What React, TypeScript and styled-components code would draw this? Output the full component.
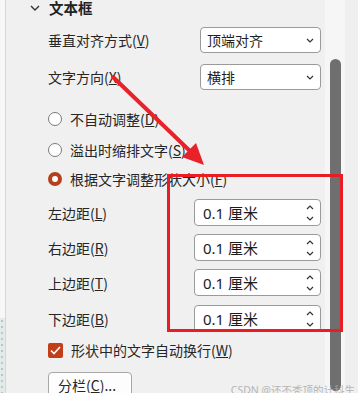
import styled, { createGlobalStyle } from "styled-components";

const GlobalStyle = createGlobalStyle`
  html, body {
    margin: 0;
    padding: 0;
    background: #f0f0f0;
  }
  body {
    font-family: "Noto Sans", "Noto Sans CJK SC", sans-serif;
  }
`;

const Screen = styled.div`
  position: relative;
  width: 358px;
  height: 393px;
  overflow: hidden;
  display: flex;
  background: #f0f0f0;
  color: #262626;
`;

const LeftStrip = styled.div`
  width: 5px;
  border-right: 1px solid #d6d6d6;
  display: flex;
  flex-direction: column;
`;

const StripTop = styled.div`
  flex: 1;
  background: #f7f7f7;
`;

const StripBottom = styled.div`
  height: 75px;
  background: #e2eaea;
  background-image: radial-gradient(#b9c6c6 0.7px, transparent 0.8px);
  background-size: 4px 6px;
`;

const Panel = styled.div`
  flex: 1;
  padding: 0 4px 0 42px;
  display: flex;
  flex-direction: column;
  font-family: "Noto Sans CJK SC", sans-serif;
  font-size: 14px;
`;

const Header = styled.div`
  display: flex;
  align-items: center;
  height: 15px;
  margin-left: -18px;
  gap: 9px;
  font-weight: 700;
  font-size: 14.5px;
  line-height: 15px;
  color: #222;
`;

const Row = styled.div<{ $mt: number; $h: number }>`
  display: flex;
  align-items: center;
  justify-content: space-between;
  margin-top: ${(p) => p.$mt}px;
  height: ${(p) => p.$h}px;
  line-height: 20px;
`;

const Label = styled.span`
  white-space: nowrap;
`;

const Select = styled.div`
  box-sizing: border-box;
  width: 121px;
  height: 26px;
  border: 1px solid #9a9a9a;
  border-radius: 4px;
  background: #fff;
  display: flex;
  align-items: center;
  justify-content: space-between;
  padding: 0 6px 0 6px;
  font-size: 14px;
  color: #1f1f1f;
`;

const Spinner = styled.div`
  box-sizing: border-box;
  width: 127px;
  height: 27px;
  border: 1px solid #9a9a9a;
  border-radius: 4px;
  background: #fff;
  display: flex;
  align-items: center;
  justify-content: space-between;
  padding: 0 6px 0 8px;
  font-family: "Noto Sans", "Noto Sans CJK SC", sans-serif;
  font-size: 15px;
  color: #1c1c1c;
`;

const SpinArrows = styled.div`
  display: flex;
  flex-direction: column;
  gap: 6px;
`;

const Option = styled.div<{ $mt: number }>`
  display: flex;
  align-items: center;
  gap: 8px;
  height: 20px;
  margin-top: ${(p) => p.$mt}px;
  line-height: 20px;
  white-space: nowrap;
`;

const Radio = styled.span<{ $on?: boolean }>`
  box-sizing: border-box;
  width: 14px;
  height: 14px;
  border-radius: 50%;
  background: #fff;
  border: ${(p) => (p.$on ? "4px solid #b5401b" : "1px solid #7a7a7a")};
  flex-shrink: 0;
`;

const Check = styled.span`
  width: 15px;
  height: 15px;
  border-radius: 2px;
  background: #c23d1a;
  display: flex;
  align-items: center;
  justify-content: center;
  flex-shrink: 0;
`;

const Button = styled.button`
  box-sizing: border-box;
  margin-top: 12px;
  width: 84px;
  height: 26px;
  border: 1px solid #a8a8a8;
  border-radius: 4px;
  background: #fdfdfd;
  font-family: "Noto Sans CJK SC", sans-serif;
  font-size: 14px;
  color: #262626;
  text-align: left;
  padding: 0 0 0 9px;
  line-height: 24px;
`;

const Track = styled.div`
  width: 20px;
  background: #f6f6f6;
  display: flex;
  justify-content: center;
  padding-top: 59px;
`;

const Thumb = styled.div`
  width: 11px;
  height: 332px;
  border-radius: 6px;
  background: #6f6f6f;
`;

const Gutter = styled.div`
  width: 13px;
  background: #efefef;
`;

const Highlight = styled.div`
  position: absolute;
  left: 167px;
  top: 174px;
  width: 176px;
  height: 158px;
  box-sizing: border-box;
  border: 3px solid #ec1c24;
  pointer-events: none;
`;

const Overlay = styled.svg`
  position: absolute;
  left: 0;
  top: 0;
  pointer-events: none;
`;

const Watermark = styled.div`
  position: absolute;
  right: 3px;
  top: 384px;
  font-family: "Noto Sans", "Noto Sans CJK SC", sans-serif;
  font-size: 10.5px;
  line-height: 12px;
  color: rgba(165, 165, 165, 0.8);
  white-space: nowrap;
`;

const Chevron = () => (
  <svg width="10" height="6" viewBox="0 0 10 6">
    <path d="M1 1 L5 5 L9 1" fill="none" stroke="#333" strokeWidth="1.4" />
  </svg>
);

const SmallDown = () => (
  <svg width="8" height="5" viewBox="0 0 8 5">
    <path d="M1 1 L4 4 L7 1" fill="none" stroke="#333" strokeWidth="1.2" />
  </svg>
);

const SmallUp = () => (
  <svg width="8" height="5" viewBox="0 0 8 5">
    <path d="M1 4 L4 1 L7 4" fill="none" stroke="#333" strokeWidth="1.2" />
  </svg>
);

const margins = [
  { label: "左边距", key: "L", mt: 10 },
  { label: "右边距", key: "R", mt: 8 },
  { label: "上边距", key: "T", mt: 8 },
  { label: "下边距", key: "B", mt: 9 },
];

export default function App() {
  return (
    <>
      <GlobalStyle />
      <Screen>
        <LeftStrip>
          <StripTop />
          <StripBottom />
        </LeftStrip>
        <Panel>
          <Header>
            <Chevron />
            <span>文本框</span>
          </Header>
          <Row $mt={12} $h={26}>
            <Label>
              垂直对齐方式(<u>V</u>)
            </Label>
            <Select>
              <span>顶端对齐</span>
              <SmallDown />
            </Select>
          </Row>
          <Row $mt={11} $h={26}>
            <Label>
              文字方向(<u>X</u>)
            </Label>
            <Select>
              <span>横排</span>
              <SmallDown />
            </Select>
          </Row>
          <Option $mt={19}>
            <Radio />
            <span>
              不自动调整(<u>D</u>)
            </span>
          </Option>
          <Option $mt={11}>
            <Radio />
            <span>
              溢出时缩排文字(<u>S</u>)
            </span>
          </Option>
          <Option $mt={9}>
            <Radio $on />
            <span>
              根据文字调整形状大小(<u>F</u>)
            </span>
          </Option>
          {margins.map((m) => (
            <Row key={m.key} $mt={m.mt} $h={27}>
              <Label>
                {m.label}(<u>{m.key}</u>)
              </Label>
              <Spinner>
                <span>0.1 厘米</span>
                <SpinArrows>
                  <SmallUp />
                  <SmallDown />
                </SpinArrows>
              </Spinner>
            </Row>
          ))}
          <Option $mt={8}>
            <Check>
              <svg width="11" height="9" viewBox="0 0 11 9">
                <path d="M1 4.5 L4 7.5 L10 1" fill="none" stroke="#fff" strokeWidth="1.6" />
              </svg>
            </Check>
            <span>
              形状中的文字自动换行(<u>W</u>)
            </span>
          </Option>
          <Button>
            分栏(<u>C</u>)...
          </Button>
        </Panel>
        <Track>
          <Thumb />
        </Track>
        <Gutter />

        <Highlight />
        <Overlay width="358" height="393" viewBox="0 0 358 393">
          <line x1="113" y1="77" x2="192" y2="153" stroke="#e8222a" strokeWidth="4" strokeLinecap="round" />
          <polygon points="204,165 182,157 196,143" fill="#e8222a" />
        </Overlay>
        <Watermark>CSDN @还不秃顶的计科生</Watermark>
      </Screen>
    </>
  );
}
